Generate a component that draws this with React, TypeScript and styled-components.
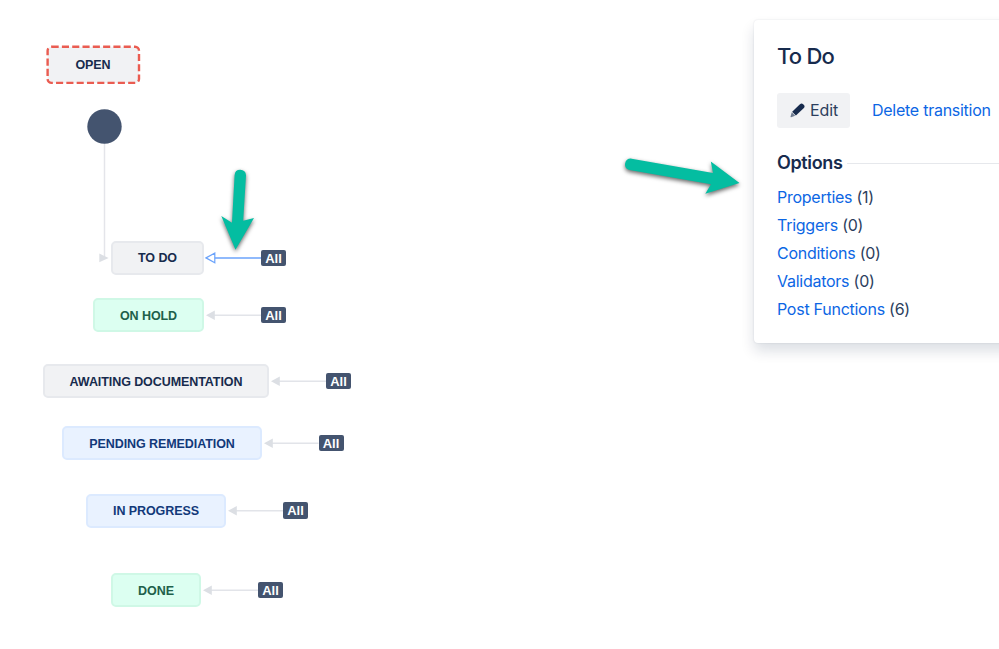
import React from 'react';
import styled, { createGlobalStyle } from 'styled-components';

type Tone = 'grey' | 'green' | 'blue';

interface Status {
  name: string;
  tone: Tone;
  x: number;
  y: number;
  width: number;
  allX: number;
  active?: boolean;
}

const tones = {
  grey: { background: '#f1f2f4', border: '#e7e9ed', text: '#172b4d' },
  green: { background: '#dcfff1', border: '#cff8e6', text: '#20604a' },
  blue: { background: '#e9f2ff', border: '#dceaff', text: '#12397a' },
};

const statuses: Status[] = [
  { name: 'TO DO', tone: 'grey', x: 111, y: 240.6, width: 93, allX: 261, active: true },
  { name: 'ON HOLD', tone: 'green', x: 93, y: 298, width: 111, allX: 261 },
  { name: 'AWAITING DOCUMENTATION', tone: 'grey', x: 43, y: 364, width: 226, allX: 326 },
  { name: 'PENDING REMEDIATION', tone: 'blue', x: 62, y: 426, width: 200, allX: 318.5 },
  { name: 'IN PROGRESS', tone: 'blue', x: 86, y: 493.5, width: 140, allX: 283 },
  { name: 'DONE', tone: 'green', x: 111, y: 573, width: 90, allX: 258 },
];

const options = [
  { label: 'Properties', count: 1 },
  { label: 'Triggers', count: 0 },
  { label: 'Conditions', count: 0 },
  { label: 'Validators', count: 0 },
  { label: 'Post Functions', count: 6 },
];

const App: React.FC = () => {
  return (
    <>
      <GlobalStyle />
      <Page>
        <Canvas>
          <Lines viewBox="0 0 755 649">
            <rect x="47.6" y="46.7" width="91.4" height="36.2" rx="4" fill="#f1f2f4" stroke="#ea5c51" strokeWidth="2.4" strokeDasharray="7.1 3.2" />
            <path d="M104.5 143V258" stroke="#e4e5ea" strokeWidth="1.5" />
            <path d="M99.3 253.6L108.6 258L99.3 262.3Z" fill="#dcdfe4" />
            <circle cx="104.5" cy="126.5" r="17.2" fill="#44546f" />
            {statuses.map((s) => (
              <TransitionLine key={s.name} status={s} />
            ))}
          </Lines>
          <OpenLabel>OPEN</OpenLabel>
          {statuses.map((s) => (
            <React.Fragment key={s.name}>
              <StatusNode $tone={s.tone} $x={s.x} $y={s.y} $width={s.width}>
                {s.name}
              </StatusNode>
              <AllBadge $x={s.allX} $y={s.y + 8.9}>All</AllBadge>
            </React.Fragment>
          ))}
          <Pointers viewBox="0 0 755 649">
            <path d="M234.6 175.2Q235 169.8 240.2 169.8Q245.6 170 246 175.2L243.2 220.7L254 218L235.5 249.7L221.3 216L232 222.7Z" fill="#04bda1" />
            <path d="M631.6 158.7L713 173L710.8 161.6L739.5 183L705.3 193.7L711 184.2L629.5 170C625.8 169 624.7 166.5 625.1 163.6C625.7 160 628.5 158.2 631.6 158.7Z" fill="#04bda1" />
          </Pointers>
        </Canvas>
        <Panel>
          <Title>To Do</Title>
          <Actions>
            <EditButton>
              <PencilIcon />
              Edit
            </EditButton>
            <Link>Delete transition</Link>
          </Actions>
          <SectionHeading>Options</SectionHeading>
          <OptionList>
            {options.map((o) => (
              <li key={o.label}>
                <Link>{o.label}</Link> ({o.count})
              </li>
            ))}
          </OptionList>
        </Panel>
      </Page>
    </>
  );
};

const TransitionLine: React.FC<{ status: Status }> = ({ status }) => {
  const tip = status.x + status.width + 2;
  const y = status.y + 17.3;
  const head = `M${tip} ${y}L${tip + 8.8} ${y - 4.8}V${y + 4.8}Z`;

  return (
    <g>
      <path d={`M${tip + 8} ${y}H${status.allX}`} stroke={status.active ? '#6ba3fb' : '#e2e4e9'} strokeWidth="1.5" />
      {status.active ? (
        <path d={head} fill="#fff" stroke="#6ba3fb" strokeWidth="1.2" />
      ) : (
        <path d={head} fill="#dcdfe4" />
      )}
    </g>
  );
};

const PencilIcon: React.FC = () => (
  <Pencil viewBox="0 0 16 16">
    <path d="M10.6 1.3Q12.4 -0.1 14 1.2L14.9 2.1Q16.2 3.8 14.8 5.4L6.3 13.4L2.3 9.2Z" />
    <path d="M1.9 9.8L5.5 13.7L1.2 15.2Q0.4 15.3 0.6 14.5Z" fillOpacity="0.6" />
  </Pencil>
);

const GlobalStyle = createGlobalStyle`
  body {
    margin: 0;
    background: #fff;
    overflow: hidden;
  }
`;

const Page = styled.div`
  display: flex;
  align-items: flex-start;
  width: 999px;
  height: 649px;
  overflow: hidden;
  color: #172b4d;
`;

const Canvas = styled.div`
  position: relative;
  flex: none;
  width: 754px;
  height: 649px;
  font-family: 'Liberation Sans', Arial, sans-serif;
`;

const Lines = styled.svg`
  position: absolute;
  left: 0;
  top: 0;
  width: 755px;
  height: 649px;
`;

const Pointers = styled(Lines)`
  filter: drop-shadow(0.5px 2px 2px rgba(0, 0, 0, 0.6));
`;

const OpenLabel = styled.div`
  position: absolute;
  left: 47px;
  top: 47px;
  width: 92px;
  line-height: 37px;
  font-size: 12.5px;
  font-weight: bold;
  letter-spacing: -0.1px;
  text-align: center;
`;

const StatusNode = styled.div<{ $tone: Tone; $x: number; $y: number; $width: number }>`
  position: absolute;
  left: ${(p) => p.$x}px;
  top: ${(p) => p.$y}px;
  width: ${(p) => p.$width}px;
  height: 34px;
  padding-top: 1.6px;
  box-sizing: border-box;
  display: flex;
  align-items: center;
  justify-content: center;
  border: 2px solid ${(p) => tones[p.$tone].border};
  border-radius: 5px;
  background: ${(p) => tones[p.$tone].background};
  color: ${(p) => tones[p.$tone].text};
  font-size: 12.5px;
  font-weight: bold;
  letter-spacing: -0.08px;
  white-space: nowrap;
`;

const AllBadge = styled.div<{ $x: number; $y: number }>`
  position: absolute;
  left: ${(p) => p.$x}px;
  top: ${(p) => p.$y}px;
  width: 25px;
  height: 16.5px;
  border-radius: 2px;
  background: #44546f;
  color: #fff;
  font-size: 13px;
  font-weight: bold;
  line-height: 17px;
  text-align: center;
`;

const Panel = styled.aside`
  flex: none;
  width: 300px;
  height: 323px;
  margin-top: 20px;
  padding: 21px 23px;
  box-sizing: border-box;
  border-radius: 4px;
  background: #fff;
  box-shadow: 0 8px 14px rgba(9, 30, 66, 0.14), 0 0 2px rgba(9, 30, 66, 0.12);
  font-family: Inter, sans-serif;
  font-size: 16px;
  letter-spacing: -0.26px;
`;

const Title = styled.h2`
  margin: 0 0 22px;
  font-size: 22px;
  font-weight: 500;
  line-height: 30px;
  letter-spacing: -0.8px;
`;

const Actions = styled.div`
  display: flex;
  align-items: center;
  gap: 22px;
  height: 35px;
  line-height: 33px;
  white-space: nowrap;
`;

const EditButton = styled.button`
  display: flex;
  align-items: center;
  gap: 5px;
  width: 73px;
  height: 35px;
  padding: 0 0 1px 13px;
  border: 0;
  border-radius: 3px;
  background: #f1f2f4;
  color: #2c3e5d;
  font: inherit;
  letter-spacing: -0.1px;
`;

const Pencil = styled.svg`
  flex: none;
  width: 15px;
  height: 15px;
  fill: #172b4d;
`;

const Link = styled.a`
  color: #0c66e4;
`;

const SectionHeading = styled.h3`
  display: flex;
  align-items: center;
  gap: 4px;
  margin: 23px 0 8px;
  font-size: 18px;
  font-weight: 600;
  line-height: 24px;
  letter-spacing: -0.35px;

  &::after {
    content: '';
    flex: 1;
    height: 1px;
    background: #e6e8ec;
  }
`;

const OptionList = styled.ul`
  margin: 0;
  padding: 0;
  list-style: none;
  color: #2c3e5d;
  line-height: 28px;
`;

export default App;
